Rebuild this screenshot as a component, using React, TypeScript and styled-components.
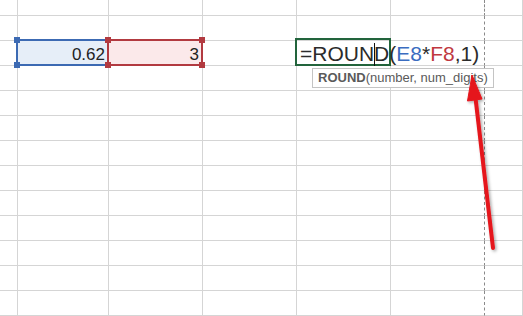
import React from 'react'
import styled, { createGlobalStyle } from 'styled-components'

const GlobalStyle = createGlobalStyle`
  html, body {
    margin: 0;
    padding: 0;
    background: #ffffff;
    overflow: hidden;
  }
  * {
    box-sizing: border-box;
  }
`

const COLUMNS = [18, 91, 94, 94, 94, 94]
const ROW_COUNT = 13
const PAGE_BREAK_COL = 5

const Page = styled.div`
  position: relative;
  width: 523px;
  height: 316px;
  overflow: hidden;
  font-family: 'Liberation Sans', Arial, sans-serif;
`

const Sheet = styled.div`
  display: grid;
  grid-template-columns: ${COLUMNS.map((w) => `${w}px`).join(' ')} 1fr;
  grid-template-rows: 16px repeat(${ROW_COUNT - 1}, 25px);
  width: 100%;
  height: 100%;
`

interface CellProps {
  $pageBreak?: boolean
  $fill?: string
  $active?: boolean
}

const Cell = styled.div<CellProps>`
  position: relative;
  display: flex;
  justify-content: flex-end;
  border-right: 1px ${(p) => (p.$pageBreak ? 'dashed #8a8a8a' : 'solid #d5d5d5')};
  border-bottom: 1px solid #d5d5d5;
  background: ${(p) => p.$fill || 'transparent'};
  z-index: ${(p) => (p.$active ? 3 : 'auto')};
`

const Value = styled.span`
  padding: 4px 3px 0 0;
  font-size: 17px;
  line-height: 20px;
  color: #222222;
`

const Selection = styled.div<{ $color: string; $layer: number }>`
  position: absolute;
  top: -2px;
  left: -2px;
  right: -1px;
  bottom: -1px;
  border: 2px solid ${(p) => p.$color};
  z-index: ${(p) => p.$layer};
  pointer-events: none;
`

const Handle = styled.span<{ $color: string; $x: 'left' | 'right'; $y: 'top' | 'bottom' }>`
  position: absolute;
  width: 6px;
  height: 6px;
  background: ${(p) => p.$color};
  ${(p) => p.$x}: -4px;
  ${(p) => p.$y}: -4px;
`

const ActiveBorder = styled.div`
  position: absolute;
  top: -3px;
  left: -2px;
  right: -1px;
  bottom: -1px;
  border: 2px solid #22643c;
  pointer-events: none;
`

const Formula = styled.div`
  position: absolute;
  left: 3px;
  top: 1px;
  white-space: nowrap;
  font-size: 21px;
  line-height: 24px;
  color: #2b2b2b;
`

const Ref = styled.span<{ $color: string }>`
  color: ${(p) => p.$color};
`

const Caret = styled.span`
  display: inline-block;
  width: 1px;
  height: 23px;
  margin-right: -1px;
  background: #111111;
  vertical-align: -5px;
`

const Tooltip = styled.div`
  position: absolute;
  top: 27px;
  left: 15px;
  height: 20px;
  padding: 0 5px;
  border: 1px solid #c4c4c4;
  background: #ffffff;
  white-space: nowrap;
  font-size: 13px;
  line-height: 18px;
  color: #5a5a5a;

  b {
    font-weight: bold;
  }
`

const ArrowLayer = styled.svg`
  position: absolute;
  inset: 0;
  pointer-events: none;
  z-index: 5;
`

const BLUE = '#3c6ab3'
const RED = '#b23a40'

const corners: Array<['left' | 'right', 'top' | 'bottom']> = [
  ['left', 'top'],
  ['left', 'bottom'],
  ['right', 'top'],
  ['right', 'bottom'],
]

const renderCell = (row: number, col: number) => {
  const pageBreak = col === PAGE_BREAK_COL
  const key = `${row}-${col}`

  if (row === 2 && col === 1) {
    return (
      <Cell key={key} $fill="#e6eef8">
        <Value>0.62</Value>
        <Selection $color={BLUE} $layer={1}>
          {corners.slice(0, 2).map(([x, y]) => (
            <Handle key={x + y} $color={BLUE} $x={x} $y={y} />
          ))}
        </Selection>
      </Cell>
    )
  }

  if (row === 2 && col === 2) {
    return (
      <Cell key={key} $fill="#fbe9ea">
        <Value>3</Value>
        <Selection $color={RED} $layer={2}>
          {corners.map(([x, y]) => (
            <Handle key={x + y} $color={RED} $x={x} $y={y} />
          ))}
        </Selection>
      </Cell>
    )
  }

  if (row === 2 && col === 4) {
    return (
      <Cell key={key} $active>
        <ActiveBorder />
        <Formula>
          =ROUN
          <Caret />
          D(<Ref $color="#3a6cc0">E8</Ref>*<Ref $color="#c0383f">F8</Ref>,1)
        </Formula>
        <Tooltip>
          <b>ROUND</b>(number, num_digits)
        </Tooltip>
      </Cell>
    )
  }

  return <Cell key={key} $pageBreak={pageBreak} />
}

export default function App() {
  const rows = Array.from({ length: ROW_COUNT }, (_, r) => r)
  const cols = Array.from({ length: COLUMNS.length + 1 }, (_, c) => c)

  return (
    <Page>
      <GlobalStyle />
      <Sheet>{rows.map((r) => cols.map((c) => renderCell(r, c)))}</Sheet>
      <ArrowLayer width="523" height="316" viewBox="0 0 523 316">
        <defs>
          <filter id="arrowShadow" x="-50%" y="-10%" width="200%" height="120%">
            <feDropShadow dx="1.5" dy="1.5" stdDeviation="1.5" floodColor="#000" floodOpacity="0.35" />
          </filter>
        </defs>
        <g filter="url(#arrowShadow)" fill="#e5141b" stroke="#e5141b">
          <line x1="493" y1="248" x2="475.5" y2="98" strokeWidth="4" strokeLinecap="round" />
          <polygon points="472,75 467.5,101 482,99" strokeWidth="1" strokeLinejoin="round" />
        </g>
      </ArrowLayer>
    </Page>
  )
}
